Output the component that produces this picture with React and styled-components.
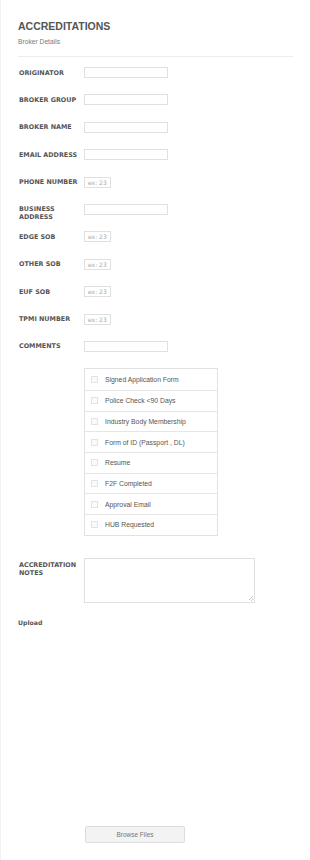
import React from 'react'
import styled, { createGlobalStyle } from 'styled-components'

const GlobalStyle = createGlobalStyle`
  html, body {
    margin: 0;
    padding: 0;
    background: #fff;
  }
  body {
    font-family: "Liberation Sans", Arial, sans-serif;
  }
`

const Page = styled.div`
  width: 310px;
  min-height: 860px;
  box-sizing: border-box;
  padding: 20px 17px 0 17px;
  border-left: 1px solid #f2f2f2;
`

const Title = styled.h1`
  margin: 0;
  font-family: "Liberation Sans", Arial, sans-serif;
  font-size: 10.5px;
  line-height: 12px;
  font-weight: bold;
  color: #555;
`

const SubTitle = styled.div`
  margin-top: 5.5px;
  font-size: 6.7px;
  line-height: 8px;
  color: #7a7a7a;
`

const Divider = styled.hr`
  margin: 10.5px 0 0 0;
  border: 0;
  border-top: 1px solid #ececec;
`

const Fields = styled.div`
  margin-top: 10px;
  display: flex;
  flex-direction: column;
`

const Row = styled.div`
  display: flex;
  align-items: flex-start;
  min-height: ${p => (p.$auto ? '0' : '27.4px')};
  margin-bottom: ${p => p.$gap || '0'};
`

const Label = styled.label`
  width: 66px;
  flex: none;
  box-sizing: border-box;
  padding: ${p => p.$top || '1.5px'} 2px 0 1px;
  font-family: "DejaVu Sans", Verdana, sans-serif;
  font-size: 6.4px;
  line-height: 8px;
  font-weight: bold;
  color: #555;
  text-transform: uppercase;
`

const TextInput = styled.input`
  box-sizing: border-box;
  width: ${p => (p.$small ? '27px' : '84px')};
  height: 11px;
  margin: 0;
  padding: 0 3px;
  border: 1px solid #e0e0e0;
  border-radius: 0;
  background: #fff;
  font-family: "DejaVu Sans", Verdana, sans-serif;
  font-size: 6px;
  color: #555;
  outline: none;
  &::placeholder {
    color: #a8a8a8;
  }
`

const Checklist = styled.div`
  margin-left: 66px;
  width: 134px;
  box-sizing: border-box;
  border: 1px solid #e2e2e2;
`

const CheckRow = styled.label`
  display: flex;
  align-items: center;
  height: 20.7px;
  box-sizing: border-box;
  padding-left: 6px;
  border-top: ${p => (p.$first ? '0' : '1px solid #e6e6e6')};
  font-family: "Liberation Sans", Arial, sans-serif;
  font-size: 6.8px;
  color: #555;
`

const Box = styled.span`
  width: 7px;
  height: 7px;
  flex: none;
  box-sizing: border-box;
  border: 1px solid #e3e3e3;
  background: #fbfbfb;
  margin-right: 7px;
`

const Notes = styled.textarea`
  box-sizing: border-box;
  width: 171px;
  height: 45px;
  margin: 0;
  padding: 2px;
  border: 1px solid #e0e0e0;
  border-radius: 0;
  font-size: 6px;
  outline: none;
  resize: none;
  background:
    linear-gradient(135deg, transparent 50%, #c8c8c8 50%, #c8c8c8 58%, transparent 58%, transparent 75%, #c8c8c8 75%, #c8c8c8 83%, transparent 83%)
    no-repeat right 1px bottom 1px / 5px 5px,
    #fff;
`

const Upload = styled.div`
  margin-top: 16px;
  font-family: "DejaVu Sans", Verdana, sans-serif;
  font-size: 6.2px;
  line-height: 8px;
  font-weight: bold;
  color: #555;
`

const DropArea = styled.div`
  height: 199px;
`

const BrowseButton = styled.button`
  display: block;
  margin-left: 67px;
  width: 100px;
  height: 17px;
  box-sizing: border-box;
  border: 1px solid #dcdcdc;
  border-radius: 2px;
  background: #f3f3f3;
  font-family: "Liberation Sans", Arial, sans-serif;
  font-size: 6.5px;
  color: #777;
  cursor: pointer;
`

const fields = [
  { label: 'Originator' },
  { label: 'Broker Group' },
  { label: 'Broker Name' },
  { label: 'Email Address' },
  { label: 'Phone Number', small: true },
  { label: 'Business Address' },
  { label: 'Edge SOB', small: true },
  { label: 'Other SOB', small: true },
  { label: 'EUF SOB', small: true },
  { label: 'TPMI Number', small: true },
  { label: 'Comments' },
]

const checks = [
  'Signed Application Form',
  'Police Check <90 Days',
  'Industry Body Membership',
  'Form of ID (Passport , DL)',
  'Resume',
  'F2F Completed',
  'Approval Email',
  'HUB Requested',
]

export default function App() {
  return (
    <>
      <GlobalStyle />
      <Page>
        <Title>ACCREDITATIONS</Title>
        <SubTitle>Broker Details</SubTitle>
        <Divider />
        <Fields>
          {fields.map((f, i) => (
            <Row key={i}>
              <Label>{f.label}</Label>
              {f.small
                ? <TextInput $small placeholder="ex: 23" />
                : <TextInput type="text" />}
            </Row>
          ))}
          <Row $auto $gap="22.6px">
            <Checklist>
              {checks.map((c, i) => (
                <CheckRow key={i} $first={i === 0}>
                  <Box />
                  {c}
                </CheckRow>
              ))}
            </Checklist>
          </Row>
          <Row $auto>
            <Label $top="2.5px">Accreditation Notes</Label>
            <Notes />
          </Row>
        </Fields>
        <Upload>Upload</Upload>
        <DropArea />
        <BrowseButton>Browse Files</BrowseButton>
      </Page>
    </>
  )
}
